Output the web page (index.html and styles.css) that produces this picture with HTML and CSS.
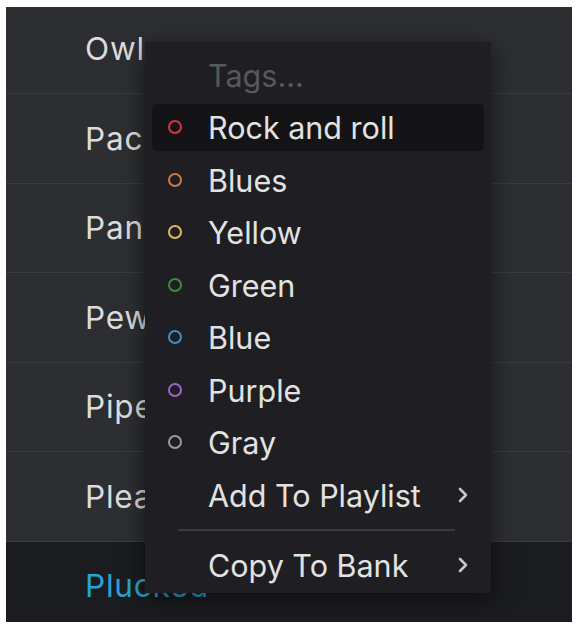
FILE: index.html
```html
<!DOCTYPE html>
<html>
<head>
<meta charset="utf-8">
<link rel="stylesheet" href="styles.css">
</head>
<body>
<div class="frame">
  <div class="list">
    <div class="row first">Owl</div>
    <div class="row">Packed</div>
    <div class="row">Panned</div>
    <div class="row">Pewter</div>
    <div class="row">Piper</div>
    <div class="row">Pleasant</div>
    <div class="row selected">Plucked</div>
  </div>
  <div class="menu">
    <div class="item placeholder"><span class="label">Tags...</span></div>
    <div class="item active"><span class="dot red"></span><span class="label">Rock and roll</span></div>
    <div class="item"><span class="dot orange"></span><span class="label">Blues</span></div>
    <div class="item"><span class="dot yellow"></span><span class="label">Yellow</span></div>
    <div class="item"><span class="dot green"></span><span class="label">Green</span></div>
    <div class="item"><span class="dot blue"></span><span class="label">Blue</span></div>
    <div class="item"><span class="dot purple"></span><span class="label">Purple</span></div>
    <div class="item"><span class="dot gray"></span><span class="label">Gray</span></div>
    <div class="item sub"><span class="label">Add To Playlist</span>
      <svg class="chev" width="12" height="18" viewBox="0 0 12 18"><path d="M3 3 L9 9 L3 15" fill="none" stroke="#c8c8ca" stroke-width="2.6" stroke-linecap="round" stroke-linejoin="round"/></svg>
    </div>
    <div class="sep"></div>
    <div class="item sub"><span class="label">Copy To Bank</span>
      <svg class="chev" width="12" height="18" viewBox="0 0 12 18"><path d="M3 3 L9 9 L3 15" fill="none" stroke="#c8c8ca" stroke-width="2.6" stroke-linecap="round" stroke-linejoin="round"/></svg>
    </div>
  </div>
</div>
</body>
</html>
```

FILE: styles.css
```css
html, body {
  margin: 0;
  padding: 0;
  background: #ffffff;
}

body {
  font-family: Inter, "Noto Sans", sans-serif;
}

.frame {
  position: relative;
  margin: 7px 0 0 6px;
  width: 566px;
  height: 615px;
  overflow: hidden;
  background: #2c2e31;
}

.list {
  display: flex;
  flex-direction: column;
  margin-top: -2.5px;
}

.row {
  height: 88.5px;
  border-bottom: 1px solid #3a3c40;
  display: flex;
  align-items: center;
  padding-left: 79px;
  font-size: 31.5px;
  letter-spacing: 0.8px;
  color: #dcdcdc;
  flex-shrink: 0;
}

.row.selected {
  background: #1b1c1f;
  color: #2aa3d3;
  border-bottom: none;
}

.menu {
  position: absolute;
  left: 139px;
  top: 35px;
  width: 346px;
  box-sizing: border-box;
  padding: 9.5px 7px 4.5px 7px;
  background: #1f1f23;
  box-shadow: 0 6px 22px rgba(0, 0, 0, 0.55);
  display: flex;
  flex-direction: column;
  gap: 5.5px;
}

.item {
  height: 47px;
  display: flex;
  align-items: center;
  padding-left: 56px;
  position: relative;
  border-radius: 5px;
  font-size: 30.5px;
  color: #e2e2e2;
}

.item.active {
  background: #141417;
}

.item.placeholder {
  color: #58585c;
}

.dot {
  position: absolute;
  left: 16px;
  top: 50%;
  width: 10px;
  height: 10px;
  margin-top: -7.5px;
  border-radius: 50%;
  border: 2.5px solid #999;
}

.dot.red { border-color: #d6344a; }
.dot.orange { border-color: #c87b4b; }
.dot.yellow { border-color: #e3b863; }
.dot.green { border-color: #3e8a3e; }
.dot.blue { border-color: #3a8fd0; }
.dot.purple { border-color: #a064c8; }
.dot.gray { border-color: #9b9b9d; }

.item.sub {
  justify-content: space-between;
  padding-right: 15px;
}

.sep {
  height: 2px;
  background: #3a3a3f;
  margin: 5px 29px 5px 26px;
}
```
